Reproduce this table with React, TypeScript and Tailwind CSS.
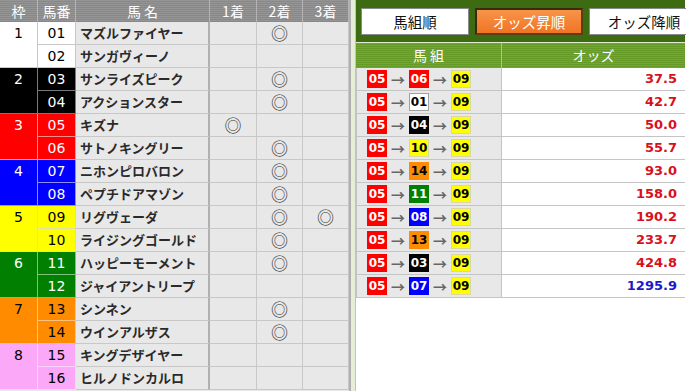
import React from "react";

type Waku = { bg: string; text: string; line: string };

const WAKU: Record<number, Waku> = {
  1: { bg: "bg-white", text: "text-black", line: "border-[#c8c8c8]" },
  2: { bg: "bg-black", text: "text-white", line: "border-[#7a7a7a]" },
  3: { bg: "bg-[#ff0000]", text: "text-white", line: "border-[#ff8c8c]" },
  4: { bg: "bg-[#0000ff]", text: "text-white", line: "border-[#8c8cff]" },
  5: { bg: "bg-[#ffff00]", text: "text-black", line: "border-[#e0e0a0]" },
  6: { bg: "bg-[#007f00]", text: "text-white", line: "border-[#7fbf7f]" },
  7: { bg: "bg-[#ff8c00]", text: "text-black", line: "border-[#ffc080]" },
  8: { bg: "bg-[#fba8f8]", text: "text-black", line: "border-[#fcd0fa]" },
};

const HORSES: { no: number; name: string; marks: [boolean, boolean, boolean] }[] = [
  { no: 1, name: "マズルファイヤー", marks: [false, true, false] },
  { no: 2, name: "サンガヴィーノ", marks: [false, false, false] },
  { no: 3, name: "サンライズピーク", marks: [false, true, false] },
  { no: 4, name: "アクションスター", marks: [false, true, false] },
  { no: 5, name: "キズナ", marks: [true, false, false] },
  { no: 6, name: "サトノキングリー", marks: [false, true, false] },
  { no: 7, name: "ニホンピロバロン", marks: [false, true, false] },
  { no: 8, name: "ペプチドアマゾン", marks: [false, true, false] },
  { no: 9, name: "リグヴェーダ", marks: [false, true, true] },
  { no: 10, name: "ライジングゴールド", marks: [false, true, false] },
  { no: 11, name: "ハッピーモーメント", marks: [false, true, false] },
  { no: 12, name: "ジャイアントリープ", marks: [false, false, false] },
  { no: 13, name: "シンネン", marks: [false, true, false] },
  { no: 14, name: "ウインアルザス", marks: [false, true, false] },
  { no: 15, name: "キングデザイヤー", marks: [false, false, false] },
  { no: 16, name: "ヒルノドンカルロ", marks: [false, false, false] },
];

const ODDS: { c: [number, number, number]; o: string; blue?: boolean }[] = [
  { c: [5, 6, 9], o: "37.5" },
  { c: [5, 1, 9], o: "42.7" },
  { c: [5, 4, 9], o: "50.0" },
  { c: [5, 10, 9], o: "55.7" },
  { c: [5, 14, 9], o: "93.0" },
  { c: [5, 11, 9], o: "158.0" },
  { c: [5, 8, 9], o: "190.2" },
  { c: [5, 13, 9], o: "233.7" },
  { c: [5, 3, 9], o: "424.8" },
  { c: [5, 7, 9], o: "1295.9", blue: true },
];

const BADGE: Record<number, string> = {
  1: "bg-white text-black border-[#a0a0a0]",
  2: "bg-black text-white border-black",
  3: "bg-[#ff0000] text-white border-[#ff0000]",
  4: "bg-[#0000ff] text-white border-[#0000ff]",
  5: "bg-[#ffff00] text-black border-[#d8d8a0]",
  6: "bg-[#007f00] text-white border-[#007f00]",
  7: "bg-[#ff8c00] text-black border-[#ff8c00]",
  8: "bg-[#fba8f8] text-black border-[#fba8f8]",
};

const pad = (n: number) => (n < 10 ? "0" + n : String(n));
const wakuOf = (n: number) => Math.ceil(n / 2);

const HEAD_GRAY =
  "bg-[repeating-linear-gradient(180deg,#959595_0px,#959595_1px,#888888_1px,#888888_2px)]";
const HEAD_GREEN =
  "bg-[repeating-linear-gradient(180deg,#74a535_0px,#74a535_1px,#659a26_1px,#659a26_2px)]";

function Mark({ on }: { on: boolean }) {
  return (
    <div className="flex items-center justify-center border-b border-r border-[#c8c8c8] bg-[#e8e8e8] font-['Noto_Sans_CJK_JP',sans-serif] text-[17px] leading-[22px] text-[#333]">
      {on ? "◎" : ""}
    </div>
  );
}

function LeftTable() {
  const cells: React.ReactNode[] = [];
  const heads = ["枠", "馬番", "馬 名", "1着", "2着", "3着"];
  heads.forEach((h, i) => {
    cells.push(
      <div
        key={"h" + i}
        className={`${HEAD_GRAY} flex items-center justify-center border-r border-[#b4b4b4] text-[14px] text-white ${
          i === 2 ? "whitespace-pre" : ""
        }`}
      >
        {h}
      </div>
    );
  });
  HORSES.forEach((h) => {
    const w = WAKU[wakuOf(h.no)];
    if (h.no % 2 === 1) {
      cells.push(
        <div
          key={"w" + h.no}
          className={`row-span-2 flex justify-center border-b border-r ${w.bg} ${w.text} ${w.line} font-['DejaVu_Sans',sans-serif] text-[14px] leading-[22px]`}
        >
          {wakuOf(h.no)}
        </div>
      );
    }
    cells.push(
      <div
        key={"u" + h.no}
        className={`flex items-center justify-center border-b border-r ${w.bg} ${w.text} ${w.line} font-['DejaVu_Sans',sans-serif] text-[14px]`}
      >
        {pad(h.no)}
      </div>
    );
    cells.push(
      <div
        key={"n" + h.no}
        className="flex items-center border-b border-r-2 border-b-[#c8c8c8] border-r-[#b0b0b0] bg-[#e8e8e8] pl-[4px] text-[13px] font-bold text-[#2a2a2a]"
      >
        {h.name}
      </div>
    );
    h.marks.forEach((m, i) => cells.push(<Mark key={"m" + h.no + i} on={m} />));
  });
  return (
    <div className="grid w-[351px] shrink-0 grid-cols-[38px_38px_134px_47px_46px_46px] grid-rows-[22px] auto-rows-[23px] border-r-2 border-[#b0b0b0] bg-[#e8e8e8]">
      {cells}
    </div>
  );
}

function Badge({ n }: { n: number }) {
  return (
    <span
      className={`inline-flex h-[18px] w-[20px] items-center justify-center border font-['DejaVu_Sans',sans-serif] text-[12px] font-bold leading-none ${BADGE[wakuOf(n)]}`}
    >
      {pad(n)}
    </span>
  );
}

function Arrow() {
  return <span className="inline-flex w-[22px] justify-center text-[14px] font-bold leading-none text-[#666]">→</span>;
}

function RightPanel() {
  return (
    <div className="flex w-[329px] shrink-0 flex-col bg-white">
      <div className="flex h-[43px] items-start gap-[6px] border-b border-[#dfe9cf] bg-[#3d6b12] pl-[5px] pt-[8px]">
        <div className="flex h-[27px] w-[108px] shrink-0 items-center justify-center border border-[#8a8a8a] bg-white text-[14.5px] text-[#111]">
          馬組順
        </div>
        <div className="flex h-[27px] w-[108px] shrink-0 items-center justify-center border-2 border-t-[#3a2a10] border-l-[#3a2a10] border-r-[#5a4015] border-b-[#5a4015] bg-[linear-gradient(180deg,#f79448,#f07425)] text-[14.5px] text-white">
          オッズ昇順
        </div>
        <div className="flex h-[27px] w-[110px] shrink-0 items-center justify-center border border-[#8a8a8a] bg-white text-[14.5px] text-[#111]">
          オッズ降順
        </div>
      </div>
      <div className={`${HEAD_GREEN} flex h-[25px] text-[14px] text-white`}>
        <div className="flex w-[146px] items-center justify-center whitespace-pre border-r border-[#a9c983]">馬 組</div>
        <div className="flex flex-1 items-center justify-center">オッズ</div>
      </div>
      {ODDS.map((r, i) => (
        <div key={i} className="flex h-[23px] border-b border-[#c4c4c4]">
          <div className="flex w-[146px] items-center border-r border-l border-[#c4c4c4] bg-[#e8e8e8] pl-[10px]">
            <Badge n={r.c[0]} />
            <Arrow />
            <Badge n={r.c[1]} />
            <Arrow />
            <Badge n={r.c[2]} />
          </div>
          <div
            className={`flex flex-1 items-center justify-end pr-[8px] font-['DejaVu_Sans',sans-serif] text-[13px] font-bold ${
              r.blue ? "text-[#1a1acc]" : "text-[#d8101c]"
            }`}
          >
            {r.o}
          </div>
        </div>
      ))}
    </div>
  );
}

export default function App() {
  return (
    <div className="flex h-[391px] w-[686px] overflow-hidden bg-white font-['Noto_Sans_CJK_JP',sans-serif]">
      <LeftTable />
      <div className="w-[5px] shrink-0 border-r border-[#b9cc9c] bg-[#e6eed8]" />
      <RightPanel />
    </div>
  );
}
